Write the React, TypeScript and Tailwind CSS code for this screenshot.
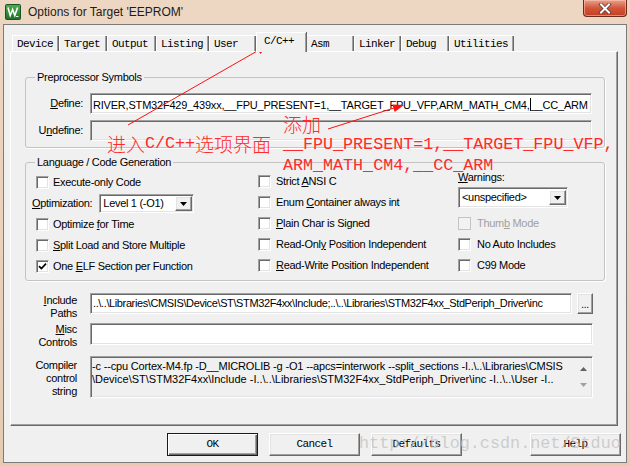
import React from "react";

const SANS = "font-['Liberation_Sans',Arial,sans-serif]";
const MONO = "font-['Liberation_Mono','Courier_New',monospace]";

// classic win32 3d borders
const sunken =
  "border border-t-[#a0a0a0] border-l-[#a0a0a0] border-r-white border-b-white shadow-[inset_1px_1px_0_#696969,inset_-1px_-1px_0_#e3e3e3]";
const raised =
  "border border-t-white border-l-white border-r-[#696969] border-b-[#696969] shadow-[inset_-1px_-1px_0_#a0a0a0,inset_1px_1px_0_#e3e3e3]";

type Tab = { label: string; width: string; active?: boolean };

const tabs: Tab[] = [
  { label: "Device", width: "w-[47px]" },
  { label: "Target", width: "w-[48px]" },
  { label: "Output", width: "w-[49px]" },
  { label: "Listing", width: "w-[53px]" },
  { label: "User", width: "w-[47px]" },
  { label: "C/C++", width: "w-[50px]", active: true },
  { label: "Asm", width: "w-[48px]" },
  { label: "Linker", width: "w-[47px]" },
  { label: "Debug", width: "w-[48px]" },
  { label: "Utilities", width: "w-[65px]" },
];

function Check({ checked = false, disabled = false }: { checked?: boolean; disabled?: boolean }) {
  return (
    <span
      className={`flex h-[13px] w-[13px] shrink-0 items-center justify-center ${
        disabled ? "border border-[#c4c4c4] bg-[#f2f2f2]" : `${sunken} bg-white`
      }`}
    >
      {checked ? (
        <svg width="9" height="9" viewBox="0 0 9 9">
          <path d="M1 4.2 L3.4 6.6 L8 1.6" stroke="#000" strokeWidth="1.7" fill="none" />
        </svg>
      ) : null}
    </span>
  );
}

function CheckRow({
  children,
  checked,
  disabled,
  height = "h-[21px]",
  gap = "gap-[4px]",
}: {
  children: React.ReactNode;
  checked?: boolean;
  disabled?: boolean;
  height?: string;
  gap?: string;
}) {
  return (
    <div className={`flex items-center ${height} ${gap}`}>
      <Check checked={checked} disabled={disabled} />
      <span className={`whitespace-nowrap ${disabled ? "text-[#a0a0a0]" : ""}`}>{children}</span>
    </div>
  );
}

function Combo({ value, width }: { value: string; width: string }) {
  return (
    <div className={`${sunken} flex h-full items-center bg-white ${width}`}>
      <span className="flex-1 whitespace-nowrap pl-[3px]">{value}</span>
      <span className={`${raised} mr-[1px] flex h-[15px] w-[17px] items-center justify-center bg-[#f0f0f0]`}>
        <svg width="7" height="4" viewBox="0 0 7 4">
          <path d="M0 0 H7 L3.5 4 Z" fill="#000" />
        </svg>
      </span>
    </div>
  );
}

function KeilIcon() {
  return (
    <svg width="16" height="16" viewBox="0 0 16 16">
      <defs>
        <linearGradient id="kg" x1="0" y1="0" x2="0" y2="1">
          <stop offset="0" stopColor="#4fae4f" />
          <stop offset="1" stopColor="#1f6e2a" />
        </linearGradient>
      </defs>
      <rect x="0.5" y="0.5" width="15" height="15" rx="1" fill="url(#kg)" stroke="#1b5221" />
      <path d="M3 3.5 L5.2 11.5 L7.6 5.5 L9.8 11.5 L12.6 3.5" stroke="#fff" strokeWidth="1.6" fill="none" />
      <path d="M11 12.5 h2.5" stroke="#dfffdf" strokeWidth="1" />
    </svg>
  );
}

function CloseButton() {
  return (
    <div className="mr-[3px] flex h-[17px] w-[44px] items-center justify-center self-start rounded-b-[4px] border border-t-0 border-[#6b2a1c] bg-gradient-to-b from-[#e8a08c] via-[#d2563a] to-[#c23f22] shadow-[inset_0_0_0_1px_rgba(255,210,190,0.5)]">
      <svg width="14" height="11" viewBox="0 0 14 11">
        <path d="M3 1.5 L11 9.5 M11 1.5 L3 9.5" stroke="#5a3a36" strokeWidth="3.6" strokeLinecap="square" />
        <path d="M3 1.5 L11 9.5 M11 1.5 L3 9.5" stroke="#fff" strokeWidth="2" strokeLinecap="square" />
      </svg>
    </div>
  );
}

function DlgButton({ label, isDefault = false }: { label: string; isDefault?: boolean }) {
  return (
    <button
      type="button"
      className={`flex h-[23px] w-[91px] items-center justify-center bg-[#f0f0f0] ${MONO} text-[11px] tracking-[-0.6px] text-black ${
        isDefault
          ? "border border-[#1a1a1a] shadow-[inset_1px_1px_0_#fff,inset_-1px_-1px_0_#696969,inset_-2px_-2px_0_#a0a0a0]"
          : raised
      }`}
    >
      {label}
    </button>
  );
}

export default function App() {
  return (
    <div
      className={`relative h-[466px] w-[630px] overflow-hidden bg-gradient-to-b from-[#edd7c2] to-[#e5cbb2] ${SANS} text-[11px] leading-[13px] tracking-[-0.3px] text-black`}
    >
      {/* title bar */}
      <div className="flex h-[24px] items-center pl-[5px]">
        <KeilIcon />
        <span className="ml-[7px] text-[12px] tracking-normal text-[#1c1c1c]">Options for Target 'EEPROM'</span>
        <div className="ml-auto flex h-full">
          <CloseButton />
        </div>
      </div>

      {/* client area */}
      <div className="mx-[3px] flex h-[439px] flex-col border border-[#7b7b7b] bg-[#f0f0f0]">
        {/* tabs */}
        <div className="flex h-[26px] items-end pl-[8px]">
          {tabs.map((t) =>
            t.active ? (
              <div
                key={t.label}
                className={`relative z-10 -mb-px flex h-[20px] ${t.width} items-start border-l border-t border-white bg-[#f0f0f0] pl-[7px] pt-[2px] shadow-[1px_0_0_#696969,inset_-1px_0_0_#a0a0a0] ${MONO} text-[11px] tracking-[-0.6px]`}
              >
                {t.label}
              </div>
            ) : (
              <div
                key={t.label}
                className={`flex h-[16px] ${t.width} items-center border-l border-t border-white bg-[#f0f0f0] pl-[4px] pt-[1px] shadow-[inset_-1px_0_0_#696969,inset_-2px_0_0_#a0a0a0] ${MONO} text-[11px] tracking-[-0.6px]`}
              >
                {t.label}
              </div>
            )
          )}
        </div>

        {/* tab panel */}
        <div className="ml-[6px] flex h-[375px] w-[608px] flex-col border border-l-white border-t-white border-r-[#696969] border-b-[#696969] shadow-[inset_-1px_-1px_0_#a0a0a0]">
          {/* preprocessor symbols */}
          <fieldset className="ml-[14px] mt-[19px] w-[580px] rounded-[3px] border border-[#c3c3c3] px-0 pb-[6px] pt-[9px] shadow-[1px_1px_0_#fff]">
            <legend className="ml-[9px] px-[2px]">Preprocessor Symbols</legend>
            <div className="flex h-[21px] items-center">
              <span className="w-[57px] text-right">
                <span className="underline">D</span>efine:
              </span>
              <div className={`${sunken} ml-[7px] flex h-[21px] w-[502px] items-center overflow-hidden bg-white pl-[2px]`}>
                <span className="whitespace-nowrap tracking-[-0.2px]">
                  RIVER,STM32F429_439xx,__FPU_PRESENT=1,__TARGET_FPU_VFP,ARM_MATH_CM4,
                  <span className="inline-block h-[13px] w-px translate-y-[2px] bg-black" />
                  __CC_ARM
                </span>
              </div>
            </div>
            <div className="mt-[6px] flex h-[21px] items-center">
              <span className="w-[57px] text-right">
                U<span className="underline">n</span>define:
              </span>
              <div className={`${sunken} ml-[7px] h-[21px] w-[502px] bg-[#f0f0f0]`} />
            </div>
          </fieldset>

          {/* language / code generation */}
          <fieldset className="ml-[14px] mt-[8px] w-[580px] rounded-[3px] border border-[#c3c3c3] pb-[3px] pl-[10px] pt-[2px] shadow-[1px_1px_0_#fff]">
            <legend className="-ml-[1px] px-[2px]">Language / Code Generation</legend>
            <div className="flex">
              {/* left column */}
              <div className="flex w-[222px] flex-col">
                <CheckRow height="h-[22px]">Execute-only Code</CheckRow>
                <div className="-ml-[4px] flex h-[21px] items-center">
                  <span>
                    <span className="underline">O</span>ptimization:
                  </span>
                  <div className="ml-[7px] h-[19px]">
                    <Combo value="Level 1 (-O1)" width="w-[95px]" />
                  </div>
                </div>
                <CheckRow>
                  Optimize <span className="underline">f</span>or Time
                </CheckRow>
                <CheckRow>
                  <span className="underline">S</span>plit Load and Store Multiple
                </CheckRow>
                <CheckRow checked>
                  One <span className="underline">E</span>LF Section per Function
                </CheckRow>
              </div>

              {/* middle column */}
              <div className="flex w-[200px] flex-col">
                <CheckRow gap="gap-[5px]">
                  Strict <span className="underline">A</span>NSI C
                </CheckRow>
                <CheckRow gap="gap-[5px]">
                  Enum <span className="underline">C</span>ontainer always int
                </CheckRow>
                <CheckRow gap="gap-[5px]">
                  <span className="underline">P</span>lain Char is Signed
                </CheckRow>
                <CheckRow gap="gap-[5px]">
                  Read-Onl<span className="underline">y</span> Position Independent
                </CheckRow>
                <CheckRow gap="gap-[5px]">
                  <span className="underline">R</span>ead-Write Position Independent
                </CheckRow>
              </div>

              {/* right column */}
              <div className="flex w-[110px] flex-col">
                <div className="h-[12px] leading-[12px]">
                  <span className="underline">W</span>arnings:
                </div>
                <div className="mt-[4px] h-[21px]">
                  <Combo value="<unspecified>" width="w-[110px]" />
                </div>
                <div className="mt-[5px]">
                  <CheckRow disabled gap="gap-[6px]">
                    Thum<span className="underline">b</span> Mode
                  </CheckRow>
                  <CheckRow gap="gap-[6px]">No Auto Includes</CheckRow>
                  <CheckRow gap="gap-[6px]">C99 Mode</CheckRow>
                </div>
              </div>
            </div>
          </fieldset>

          {/* include / misc / compiler string */}
          <div className="mt-[12px] flex h-[30px] items-start">
            <div className="w-[66px] pt-[1px] text-right">
              <span className="underline">I</span>nclude
              <br />
              Paths
            </div>
            <div className={`${sunken} ml-[13px] flex h-[21px] w-[482px] items-center overflow-hidden bg-white pl-[2px]`}>
              <span className="whitespace-nowrap tracking-[-0.38px]">
                ..\..\Libraries\CMSIS\Device\ST\STM32F4xx\Include;..\..\Libraries\STM32F4xx_StdPeriph_Driver\inc
              </span>
            </div>
            <button type="button" className={`${raised} ml-[5px] flex h-[21px] w-[16px] items-end justify-center bg-[#f0f0f0] pb-[4px] text-[10px] leading-[8px]`}>
              ...
            </button>
          </div>
          <div className="flex h-[33px] items-start">
            <div className="w-[66px] text-right">
              <span className="underline">M</span>isc
              <br />
              Controls
            </div>
            <div className={`${sunken} ml-[13px] h-[22px] w-[503px] bg-white`} />
          </div>
          <div className="flex items-start">
            <div className="w-[66px] pt-[3px] text-right">
              Compiler
              <br />
              control
              <br />
              string
            </div>
            <div className={`${sunken} ml-[13px] flex h-[42px] w-[503px] bg-[#f0f0f0]`}>
              <div className="flex-1 overflow-hidden pl-[1px] pt-[3px] tracking-[-0.17px]">
                <div className="whitespace-nowrap">
                  -c --cpu Cortex-M4.fp -D__MICROLIB -g -O1 --apcs=interwork --split_sections -I..\..\Libraries\CMSIS
                </div>
                <div className="whitespace-nowrap tracking-[0px]">
                  \Device\ST\STM32F4xx\Include -I..\..\Libraries\STM32F4xx_StdPeriph_Driver\inc -I..\..\User -I..
                </div>
              </div>
              <div className="flex w-[17px] flex-col items-center justify-between py-[10px]">
                <svg width="7" height="4" viewBox="0 0 7 4">
                  <path d="M0 4 H7 L3.5 0 Z" fill="#606060" />
                </svg>
                <svg width="7" height="4" viewBox="0 0 7 4">
                  <path d="M0 0 H7 L3.5 4 Z" fill="#a0a0a0" />
                </svg>
              </div>
            </div>
          </div>
        </div>

        {/* dialog buttons */}
        <div className="mt-[7px] flex gap-[11px] pl-[163px] pr-[5px]">
          <DlgButton label="OK" isDefault />
          <DlgButton label="Cancel" />
          <DlgButton label="Defaults" />
          <div className="ml-auto">
            <DlgButton label="Help" />
          </div>
        </div>
      </div>

      {/* watermark */}
      <div
        className={`pointer-events-none absolute left-[359px] top-[433px] whitespace-nowrap ${MONO} text-[16.8px] leading-[22px] tracking-normal text-[#c0c0c0]/75`}
      >
        http://blog.csdn.net/Stduo
      </div>

      {/* red annotations */}
      <svg className="pointer-events-none absolute left-0 top-0" width="630" height="466" viewBox="0 0 630 466">
        <line x1="128" y1="125" x2="259" y2="50" stroke="#ff1010" strokeWidth="1" />
        <polygon points="268,45 260.4,54 256.4,47" fill="#ff1010" />
        <line x1="328" y1="129" x2="394" y2="108" stroke="#ff1010" strokeWidth="1" />
        <polygon points="404,105 394.7,112.1 392.3,104.5" fill="#ff1010" />
      </svg>
      <div className="pointer-events-none absolute left-[107px] top-[133px] flex h-[21px] items-center whitespace-nowrap tracking-normal text-[#ff2a2a]">
        <span className="font-['Noto_Sans_CJK_SC',sans-serif] text-[19px] font-light">进入</span>
        <span className={`${MONO} text-[16.7px]`}>C/C++</span>
        <span className="font-['Noto_Sans_CJK_SC',sans-serif] text-[19px] font-light">选项界面</span>
      </div>
      <div className={`pointer-events-none absolute left-[283px] top-[113px] flex flex-col whitespace-nowrap ${MONO} text-[16.7px] leading-[21px] tracking-normal text-[#ff2a2a]`}>
        <span className="font-['Noto_Sans_CJK_SC',sans-serif] text-[19px] font-light">添加</span>
        <span>__FPU_PRESENT=1,__TARGET_FPU_VFP,</span>
        <span>ARM_MATH_CM4,__CC_ARM</span>
      </div>
    </div>
  );
}
